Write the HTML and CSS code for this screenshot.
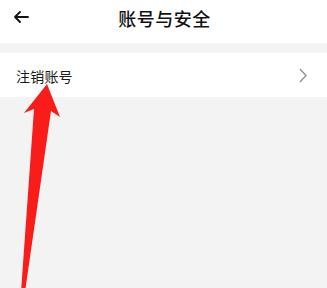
FILE: index.html
```html
<!DOCTYPE html>
<html lang="zh">
<head>
<meta charset="utf-8">
<link rel="stylesheet" href="styles.css">
</head>
<body>
<div class="page">
  <header class="topbar">
    <svg class="back" width="16" height="12" viewBox="0 0 16 12"><path d="M15 6H2M7 1L2 6l5 5" fill="none" stroke="#111" stroke-width="1.8" stroke-linecap="round" stroke-linejoin="round"/></svg>
    <h1 class="title">账号与安全</h1>
  </header>
  <div class="gap"></div>
  <div class="row">
    <span class="label">注销账号</span>
    <svg class="chev" width="8" height="15" viewBox="0 0 8 15"><path d="M1 1l6 6.5L1 14" fill="none" stroke="#8a8a8a" stroke-width="1.2"/></svg>
  </div>
  <div class="rest"></div>
  <svg class="annot" width="327" height="288" viewBox="0 0 327 288"><polygon points="47,84 60,117 51,111 25,292 21,292 34,109 24,113" fill="#f91d1a"/></svg>
</div>
</body>
</html>
```

FILE: styles.css
```css
html, body {
  margin: 0;
  padding: 0;
  background: #f3f3f3;
}
.page {
  position: relative;
  width: 327px;
  height: 288px;
  overflow: hidden;
  font-family: "Noto Sans CJK SC", "Noto Sans", sans-serif;
  display: flex;
  flex-direction: column;
}
.topbar {
  height: 43px;
  background: #fff;
  display: flex;
  align-items: center;
  justify-content: center;
  position: relative;
}
.back {
  position: absolute;
  left: 13px;
  top: 11px;
}
.title {
  margin: 0;
  font-size: 18px;
  font-weight: 500;
  letter-spacing: 0.5px;
  color: #111;
  line-height: 1;
  padding-left: 2px;
  margin-top: -7px;
}
.gap {
  height: 10px;
  background: #f3f3f3;
}
.row {
  height: 44px;
  background: #fff;
  display: flex;
  align-items: center;
  justify-content: space-between;
  padding: 0 20px 0 16px;
}
.label {
  font-size: 14px;
  color: #1a1a1a;
  letter-spacing: 0.2px;
  margin-top: 1px;
}
.chev {
  display: block;
}
.rest {
  flex: 1;
  background: #f3f3f3;
}
.annot {
  position: absolute;
  left: 0;
  top: 0;
}
```
